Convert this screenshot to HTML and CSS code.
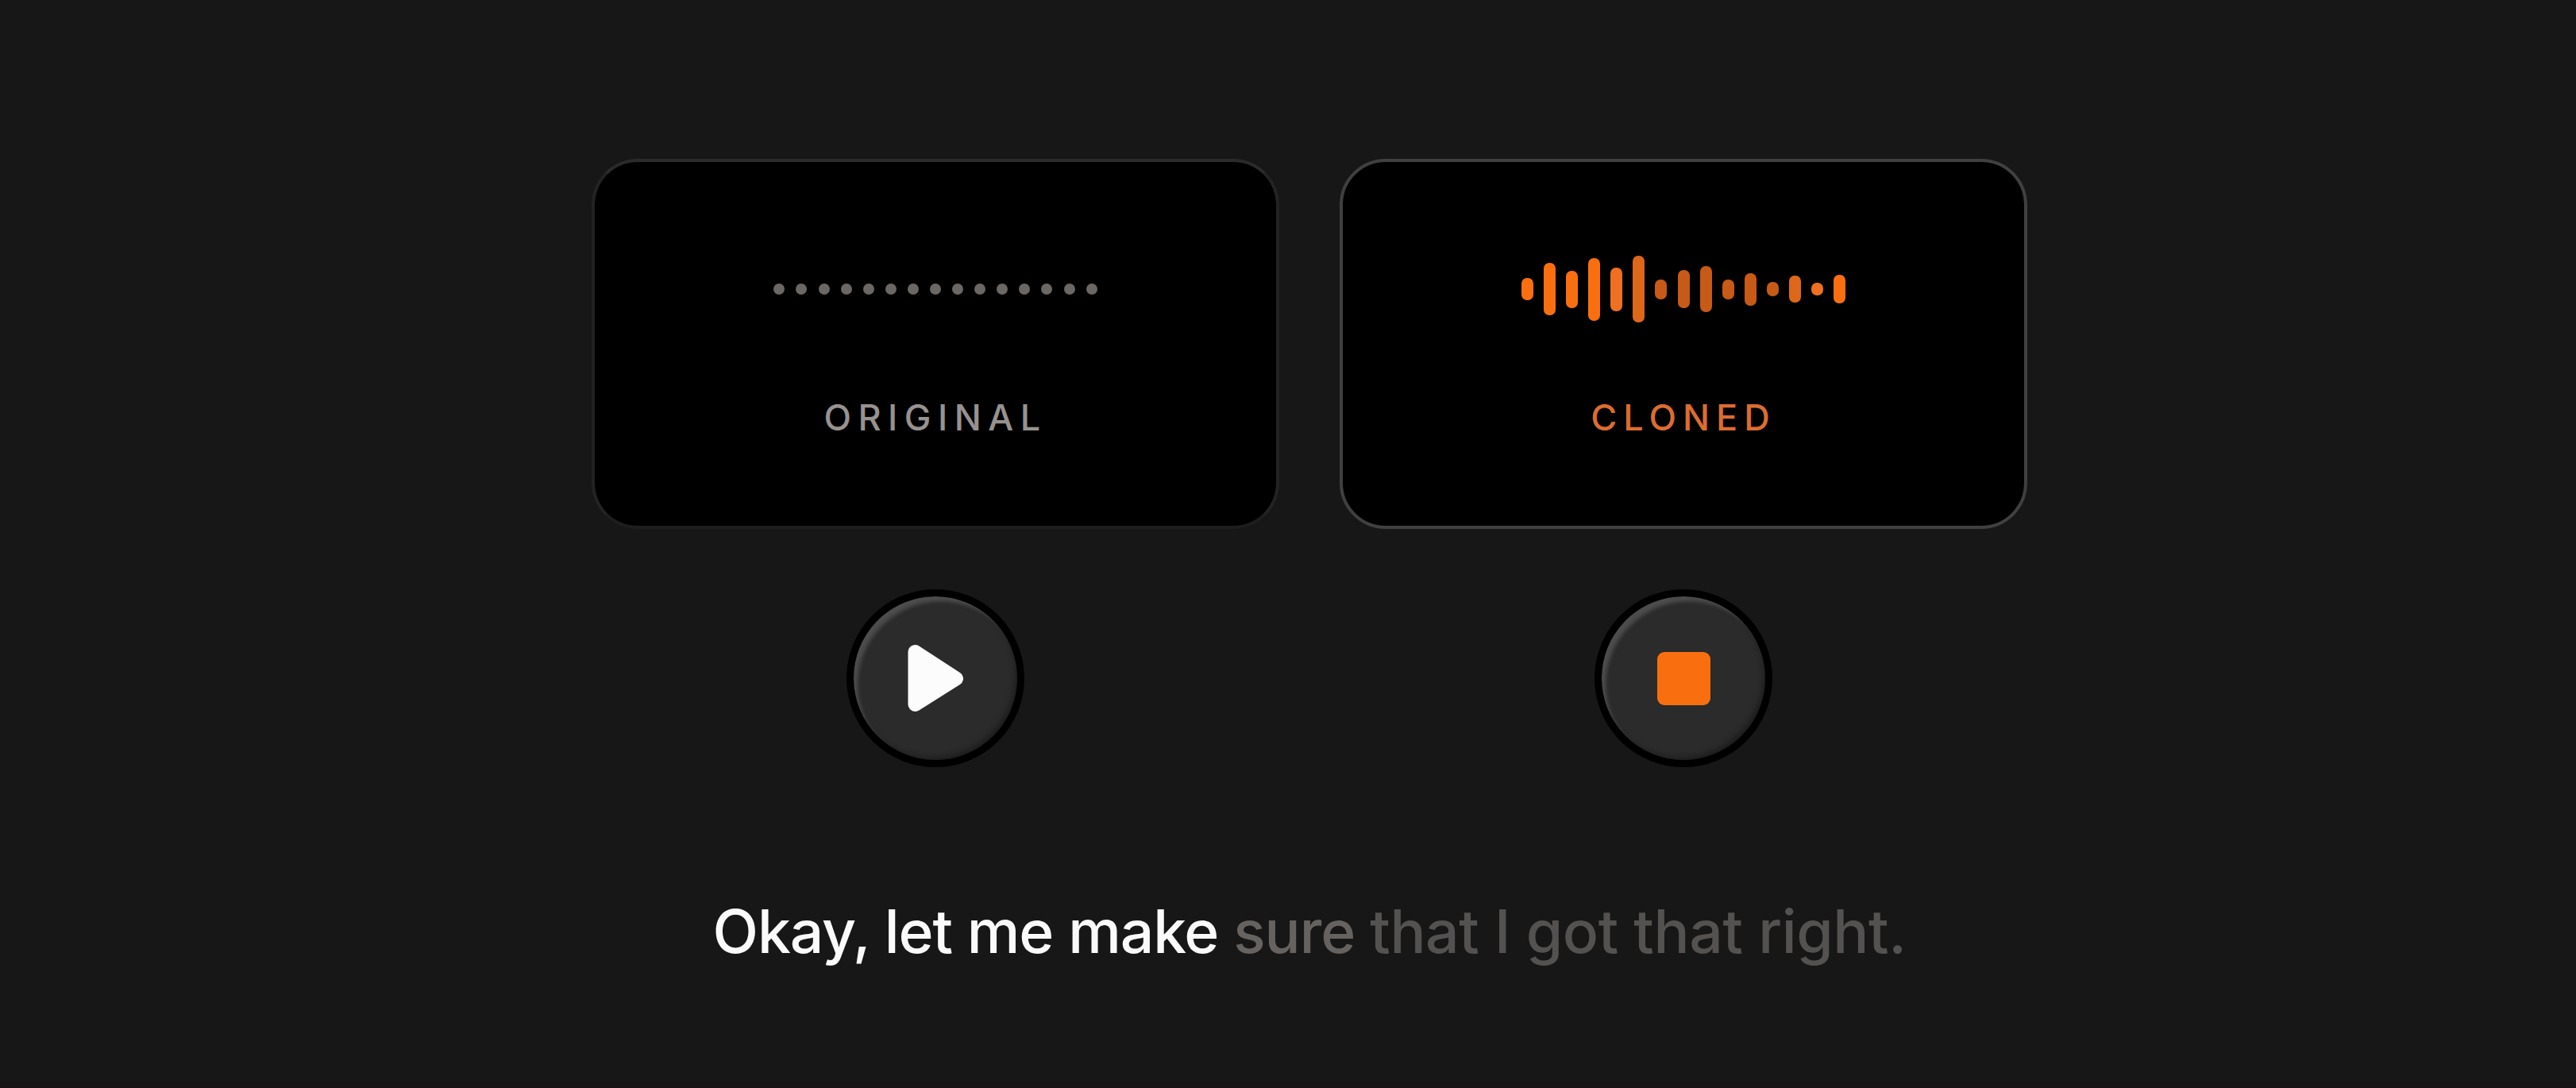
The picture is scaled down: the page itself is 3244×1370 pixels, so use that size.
FILE: index.html
```
<!DOCTYPE html>
<html lang="en">
<head>
  <meta charset="utf-8">
  <title>Voice cloning</title>
  <meta name="viewport" content="width=device-width, initial-scale=1">
  <link rel="stylesheet" href="styles.css">
</head>
<body>
  <main class="demo">
    <div class="voices">
      <section class="voice">
        <div class="card">
          <div class="wave">
            <i></i><i></i><i></i><i></i><i></i><i></i><i></i><i></i><i></i><i></i><i></i><i></i><i></i><i></i><i></i>
          </div>
          <div class="label">ORIGINAL</div>
        </div>
        <button class="knob" aria-label="Play">
          <svg width="72" height="86" viewBox="0 0 72 86">
            <path d="M10.500 10V76L62 43.500Z" fill="#fcfcfc" stroke="#fcfcfc" stroke-width="18" stroke-linejoin="round"/>
          </svg>
        </button>
      </section>
      <section class="voice active">
        <div class="card">
          <div class="wave">
            <i style="height:28px"></i>
            <i style="height:66px"></i>
            <i style="height:47px"></i>
            <i style="height:79px"></i>
            <i class="mid" style="height:55px"></i>
            <i class="low" style="height:84px"></i>
            <i class="dim" style="height:25px"></i>
            <i class="dim" style="height:48px"></i>
            <i class="dim" style="height:58px"></i>
            <i class="dim" style="height:25px"></i>
            <i class="dim" style="height:41px"></i>
            <i class="dim" style="height:18px"></i>
            <i class="low" style="height:34px"></i>
            <i class="mid" style="height:16px"></i>
            <i style="height:36px"></i>
          </div>
          <div class="label">CLONED</div>
        </div>
        <button class="knob" aria-label="Stop"><span class="stop"></span></button>
      </section>
    </div>
    <p class="caption">Okay, let me make <span class="next">sure</span> <span class="rest">that I got that right.</span></p>
  </main>
</body>
</html>
```

FILE: styles.css
```
* {box-sizing: border-box;}
body {margin: 0; height: 1370px; background: #171717; border-bottom: 1px solid #1b1118; font-family: Inter, "Liberation Sans", sans-serif;}
.demo {display: flex; flex-direction: column; align-items: center; padding: 200px 0 0 54px;}
.voices {display: flex; gap: 76px;}
.voice {display: flex; flex-direction: column; align-items: center; gap: 76px;}

.card {width: 866px; height: 466px; padding-top: 115px; border: 4px solid #232323; border-top-color: #2b2b2b; border-bottom-color: #1e1e1e; border-radius: 58px; background: #000; display: flex; flex-direction: column; align-items: center;}
.active .card {border-color: #404040;}

.wave {display: flex; align-items: center; gap: 14.100px; height: 90px;}
.wave i {width: 14px; height: 14px; border-radius: 7px; background: #6b6765;}
.active .wave {gap: 13.100px;}
.active .wave i {width: 15px; background: #f96f10;}
.active .wave .mid {background: #ee7020;}
.active .wave .low {background: #dd681a;}
.active .wave .dim {background: #c65a16;}

.label {margin-top: 90px; font-size: 45px; font-weight: 500; line-height: 54px; letter-spacing: 8.500px; color: #979290;}
.active .label {color: #dc6c30; letter-spacing: 8px;}

.knob {width: 224px; height: 224px; padding: 0; border: 9px solid #000; border-radius: 50%; background: #2b2b2b; box-shadow: inset 7px 8px 5px -2px #4d4d4d, inset -5px -6px 6px -3px #1d1d1d; display: flex; align-items: center; justify-content: center;}
.stop {width: 67px; height: 67px; border-radius: 9px; background: #f96f10;}

.caption {margin: 162px 0 0; font-size: 75px; font-weight: 450; line-height: 90px; letter-spacing: -1.100px; white-space: nowrap; color: #fafafa;}
.next, .rest {letter-spacing: -.4px;}
.next {color: #666260; letter-spacing: -1px;}
.rest {color: #545251;}
```
